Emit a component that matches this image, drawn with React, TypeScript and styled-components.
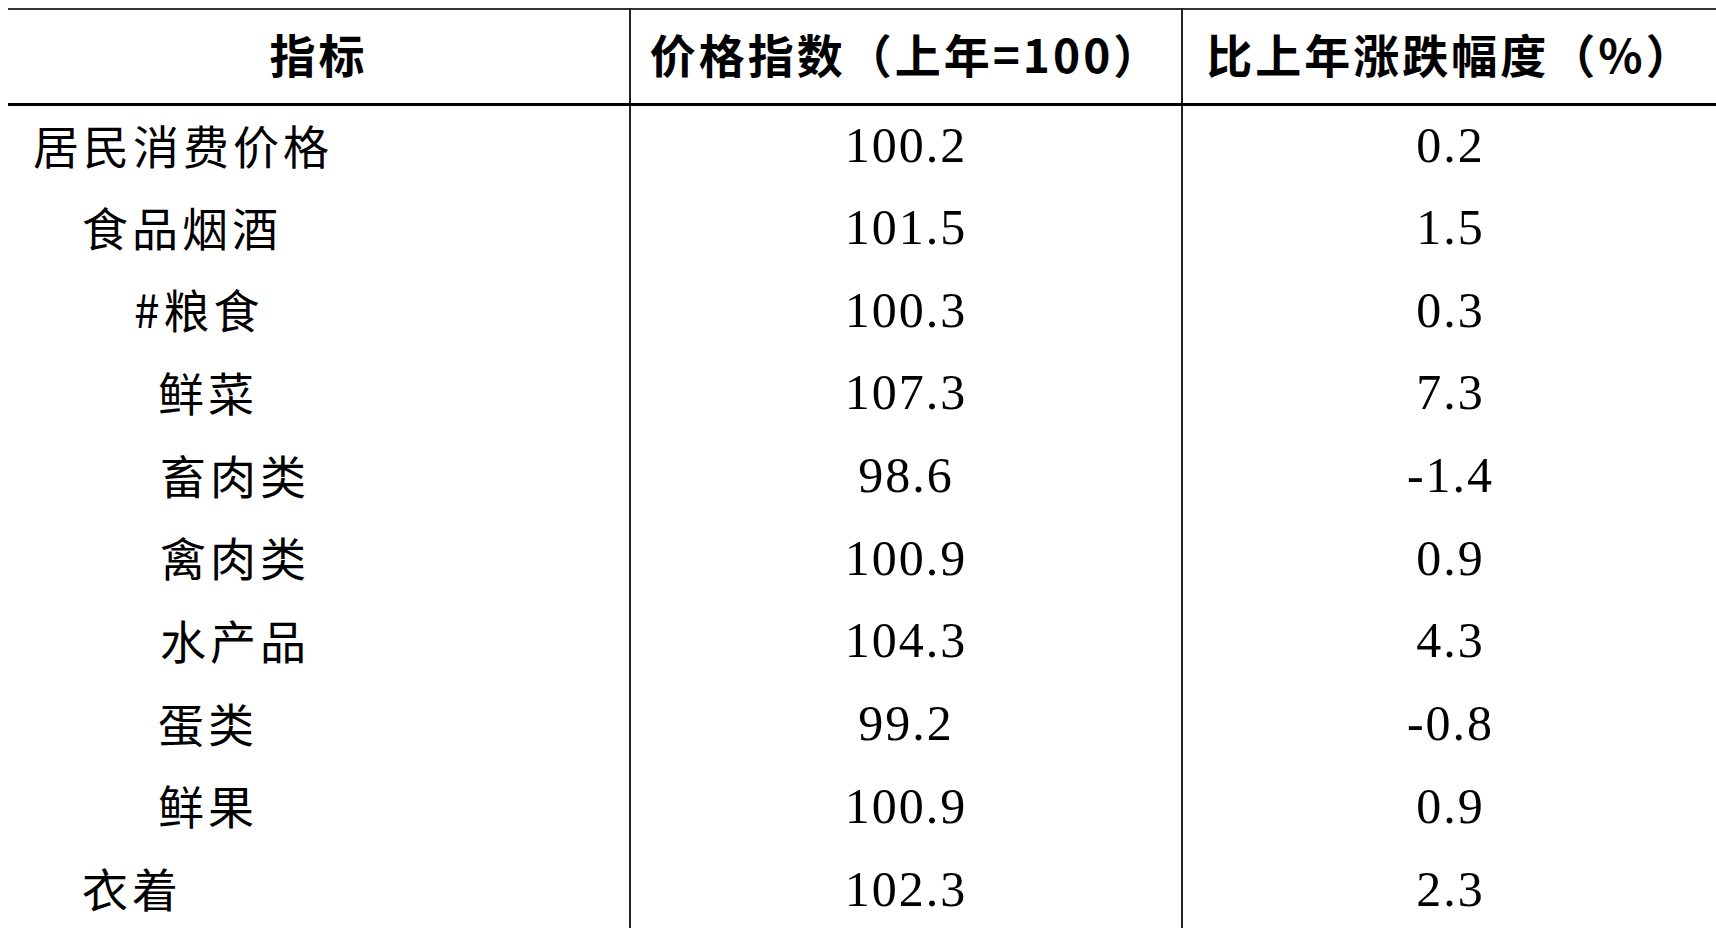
import React from 'react'
import styled, {createGlobalStyle} from 'styled-components'

const GlobalStyle = createGlobalStyle`
  html {
    overflow: hidden;
    background: #fff;
  }
  body {
    margin: 8px 0 0 8px;
    color: #000;
    font-family: "Noto Sans CJK SC", "Noto Sans", sans-serif;
  }
`

interface PriceRow {
  name: string
  indent: number
  index: string
  change: string
}

const rows: PriceRow[] = [
  {name: '居民消费价格', indent: 25, index: '100.2', change: '0.2'},
  {name: '食品烟酒', indent: 74, index: '101.5', change: '1.5'},
  {name: '#粮食', indent: 126, index: '100.3', change: '0.3'},
  {name: '鲜菜', indent: 150, index: '107.3', change: '7.3'},
  {name: '畜肉类', indent: 152, index: '98.6', change: '-1.4'},
  {name: '禽肉类', indent: 152, index: '100.9', change: '0.9'},
  {name: '水产品', indent: 152, index: '104.3', change: '4.3'},
  {name: '蛋类', indent: 150, index: '99.2', change: '-0.8'},
  {name: '鲜果', indent: 150, index: '100.9', change: '0.9'},
  {name: '衣着', indent: 74, index: '102.3', change: '2.3'},
]

const Table = styled.table`
  width: 1710px;
  table-layout: fixed;
  border-collapse: collapse;
  border-top: 2px solid #333;
`

const HeadCell = styled.th`
  height: 85px;
  padding: 0 0 8px;
  font-size: 46px;
  font-weight: 700;
  letter-spacing: 3px;
  text-align: center;
  vertical-align: middle;
  border-bottom: 3px solid #000;
  & + & {
    border-left: 2px solid #222;
  }
`

const Row = styled.tr`
  height: 82.7px;
`

const NameCell = styled.td<{$indent: number}>`
  padding: 0 0 6px ${(p) => p.$indent}px;
  font-size: 46px;
  letter-spacing: 4px;
  white-space: nowrap;
  vertical-align: middle;
  line-height: 1;
`

const NumberCell = styled.td`
  padding: 0 0 3px;
  border-left: 2px solid #222;
  font-family: "Liberation Serif", serif;
  font-size: 50px;
  letter-spacing: 2px;
  text-align: center;
  vertical-align: middle;
  line-height: 1;
`

export default function App() {
  return (
    <>
      <GlobalStyle />
      <Table>
        <colgroup>
          <col style={{width: 622}} />
          <col style={{width: 552}} />
          <col style={{width: 536}} />
        </colgroup>
        <thead>
          <tr>
            <HeadCell>指标</HeadCell>
            <HeadCell>价格指数（上年=100）</HeadCell>
            <HeadCell>比上年涨跌幅度（%）</HeadCell>
          </tr>
        </thead>
        <tbody>
          {rows.map((row) => (
            <Row key={row.name}>
              <NameCell $indent={row.indent}>{row.name}</NameCell>
              <NumberCell>{row.index}</NumberCell>
              <NumberCell>{row.change}</NumberCell>
            </Row>
          ))}
        </tbody>
      </Table>
    </>
  )
}
